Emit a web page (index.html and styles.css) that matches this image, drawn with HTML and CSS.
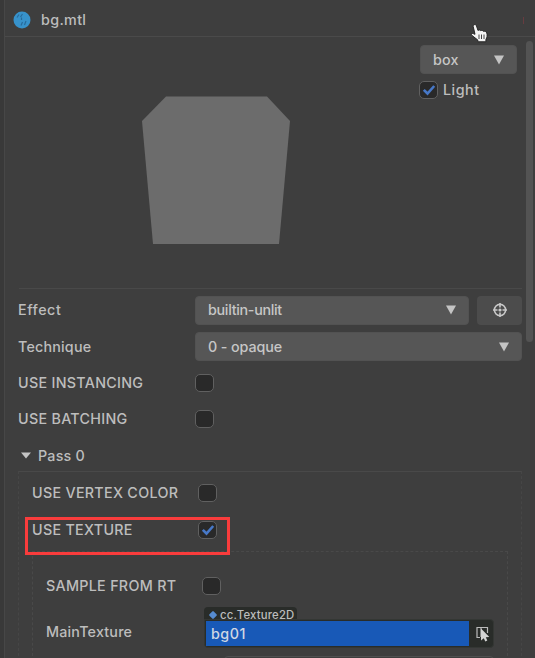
FILE: index.html
```html
<!DOCTYPE html>
<html lang="en">
<head>
<meta charset="utf-8">
<title>bg.mtl</title>
<link rel="stylesheet" href="styles.css">
</head>
<body>
<main class="panel">
  <header class="header">
    <svg class="material" width="18" height="18" viewBox="0 0 18 18"><circle cx="9" cy="9" r="8.5" fill="#3792cb"/><path d="M4 6.500l2-3M7.500 6l2-3M8 14.500l1.500-3.500M11.500 14l1.500-4M8.500 6.500v2.500" stroke="#286b9b" stroke-width="1.2" fill="none"/></svg>
    <h1 class="title">bg.mtl</h1>
    <i class="mark"></i>
  </header>
  <section class="preview">
    <svg class="mesh" width="150" height="149" viewBox="0 0 150 149"><path d="M25 .5H126L149 25L138 148H12L1 25Z" fill="#6c6c6c"/></svg>
    <div class="options">
      <div class="select"><span>box</span><svg class="arrow" width="10" height="10" viewBox="0 0 10 10"><path d="M0 .5h10L5 9.5z"/></svg></div>
      <label class="light"><span class="check"><svg width="14" height="14" viewBox="0 0 14 14"><path d="M1.800 6.800l3.700 3.700L12.200 3"/></svg></span>Light</label>
    </div>
  </section>
  <section class="props">
    <div class="row"><span class="label effect">Effect</span><div class="select"><span class="builtin">builtin-unlit</span><svg class="arrow" width="10" height="10" viewBox="0 0 10 10"><path d="M0 .5h10L5 9.5z"/></svg></div>
      <div class="locate"><svg width="16" height="16" viewBox="0 0 16 16"><circle cx="8" cy="8" r="5.6"/><path d="M8 1v4.500M8 10.500v4.500M1 8h4.500M10.500 8h4.500"/><circle class="dot" cx="8" cy="8" r="1.6"/></svg></div></div>
    <div class="row"><span class="label technique">Technique</span><div class="select"><span class="opaque">0 - opaque</span><svg class="arrow" width="10" height="10" viewBox="0 0 10 10"><path d="M0 .5h10L5 9.5z"/></svg></div></div>
    <div class="row"><span class="label caps">USE INSTANCING</span><span class="check"></span></div>
    <div class="row"><span class="label caps">USE BATCHING</span><span class="check"></span></div>
    <div class="row pass"><svg class="arrow" width="10" height="7" viewBox="0 0 10 7"><path d="M0 .5h10L5 6.5z"/></svg>Pass 0</div>
    <div class="group">
      <div class="row"><span class="label caps vertex">USE VERTEX COLOR</span><span class="check"></span></div>
      <div class="row"><span class="label caps texture">USE TEXTURE</span><span class="check"><svg width="14" height="14" viewBox="0 0 14 14"><path d="M1.800 6.800l3.700 3.700L12.200 3"/></svg></span></div>
      <div class="subgroup">
        <div class="row"><span class="label caps sample">SAMPLE FROM RT</span><span class="check"></span></div>
        <div class="row asset-row"><span class="label main">MainTexture</span>
          <div class="asset">
            <div class="type"><i class="diamond"></i>cc.Texture2D</div>
            <div class="field"><span class="value">bg01</span><svg width="15" height="18" viewBox="0 0 15 18"><path class="frame" d="M5 12.500H2V2.500h10.500V8M6 3v9"/><path class="pointer" d="M6 3.500v12l2.800-2.300 1.500 3.300 2-1-1.500-3.200 3.500-.3z"/></svg></div>
          </div></div>
        <div class="next"></div>
      </div>
    </div>
  </section>
</main>
<div class="scrollbar"></div>
<div class="highlight"></div>
<svg class="cursor" width="20" height="22" viewBox="0 0 20 22"><path d="M4 2C5 1 6 1.500 6.500 3L8 7.500c1-.9 2.200-.7 2.800.3 1-.7 2.200-.3 2.700.6 1.200-.4 2.800.2 3.300 1.500.6 2.500.4 4.500-.9 6.600v2.300H7.800V17L2 12.500c-1.300-1.300-.3-2.700 1.500-1.800l1.500.6L3.300 4C3 3 3.200 2.400 4 2z"/><path class="fingers" d="M9 11.500v4.500M11.500 11.500v4.500M14 11.500v4.500"/></svg>
</body>
</html>
```
FILE: styles.css
```css
* { box-sizing: border-box; }
body { margin: 0; width: 535px; height: 658px; overflow: hidden; position: relative; background: #393939; color: #bdbdbd; font: 450 14.3px/20px Inter, "Liberation Sans", sans-serif; letter-spacing: .2px; }
svg { display: block; flex: none; }
.panel { height: 658px; margin-left: 4px; background: #3e3e3e; border-left: 1px solid #474747; overflow: hidden; }
.header { display: flex; align-items: center; height: 37px; padding: 4px 11px 0 9px; border-bottom: 1px solid #4a4a4a; }
.title { margin: 0 0 0 9px; font-size: 14.3px; font-weight: 500; letter-spacing: .35px; }
.material { margin-left: -1px; }
.title { padding-left: 1px; }
.mark { width: 1px; height: 7px; margin-left: auto; background: #673c40; }
.preview { display: flex; justify-content: space-between; height: 252px; margin: 0 13px 0 14px; border-bottom: 1px solid #494949; }
.mesh { margin: 59px 0 0 122px; }
.options { width: 97px; margin: 8px 5px 0 0; }
.select { display: flex; flex: 1; align-items: center; justify-content: space-between; height: 29px; padding: 0 12px; border-radius: 4px; background: #565656; border: 1px solid #525252; color: #c6c6c6; }
.arrow { fill: #c4c4c4; }
.light { display: flex; align-items: center; gap: 5px; margin-top: 6px; letter-spacing: .5px; }
.light .check { margin-left: -1px; }
.props { padding: 3px 13px 0 13px; }
.row { display: flex; align-items: center; height: 36.4px; }
.label { flex: none; width: 177px; white-space: nowrap; }
.caps { letter-spacing: .3px; }
.effect { letter-spacing: .55px; }
.builtin { letter-spacing: -.3px; }
.opaque { letter-spacing: -.1px; }
.check { display: flex; flex: none; align-items: center; justify-content: center; width: 19px; height: 18px; border: 1px solid #606060; border-radius: 5px; background: #292929; }
.check path { fill: none; stroke: #4778c7; stroke-width: 2.6; }
.locate { display: flex; align-items: center; justify-content: center; width: 45px; height: 29px; margin-left: 8px; border-radius: 4px; background: #4c4c4c; }
.locate svg { fill: none; stroke: #c9c9c9; stroke-width: 1.6; }
.locate .dot { fill: #c9c9c9; stroke: none; }
.pass { gap: 7px; padding-left: 3px; }
.group { height: 190px; margin-top: -3px; padding: 3px 13px 0; border-top: 1px solid #494949; border-left: 1px dashed #464646; border-right: 1px dashed #464646; }
.vertex, .texture { width: 166px; }
.subgroup { height: 110px; margin-top: 3px; padding: 16px 13px 0 13px; border: 1px dashed #494949; border-bottom: 0; }
.sample { width: 156px; }
.asset-row { height: 50px; margin-top: 1px; align-items: flex-start; }
.main { width: 158px; padding-top: 17px; }
.asset { flex: 1; padding-top: 2px; }
.type { display: flex; align-items: center; gap: 4px; width: 93px; height: 12px; padding: 3px 0 0 6px; border-radius: 4px 4px 0 0; background: #292c29; font-size: 11.3px; line-height: 12px; letter-spacing: .2px; white-space: nowrap; }
.diamond { width: 6px; height: 6px; flex: none; border-radius: 1px; background: #568bd0; transform: rotate(45deg); }
.field { display: flex; align-items: center; justify-content: space-between; height: 29px; padding: 1px 3px 1px 1px; background: #292c29; border: 1px solid #343734; border-radius: 0 4px 4px 4px; }
.value { width: 263px; height: 25px; padding-left: 5px; line-height: 25px; letter-spacing: .5px; background: #1859b7; color: #d0d7e3; }
.frame { fill: none; stroke: #bbb; stroke-width: 1.2; }
.pointer { fill: #d5d5d5; }
.next { height: 12px; margin: 1px 0 0 178px; border: 1px solid #505050; border-radius: 4px; }
.scrollbar { position: absolute; left: 526px; top: 41px; width: 7px; height: 301px; border-radius: 4px; background: #535353; }
.highlight { position: absolute; left: 25px; top: 517px; width: 205px; height: 38px; border: 3px solid #f93c3c; }
.cursor { position: absolute; left: 470px; top: 23px; fill: #f4f4f4; stroke: #262626; stroke-width: 1; }
.fingers { fill: none; stroke: #444; stroke-width: 1; }
```
